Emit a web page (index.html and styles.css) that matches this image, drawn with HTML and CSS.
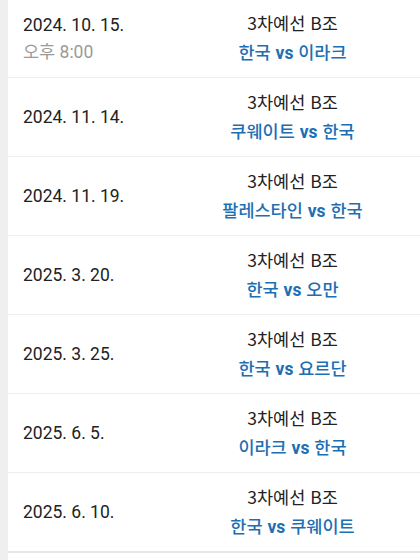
FILE: index.html
```html
<!DOCTYPE html>
<html lang="ko">
<head>
<meta charset="utf-8">
<link rel="stylesheet" href="styles.css">
</head>
<body>
<div class="page">
  <div class="strip"></div>
  <ul class="list">
    <li class="row">
      <div class="when"><div class="date">2024. 10. 15.</div><div class="time">오후 8:00</div></div>
      <div class="match"><div class="stage">3차예선 B조</div><div class="teams">한국 <b>vs</b> 이라크</div></div>
    </li>
    <li class="row">
      <div class="when"><div class="date">2024. 11. 14.</div></div>
      <div class="match"><div class="stage">3차예선 B조</div><div class="teams">쿠웨이트 <b>vs</b> 한국</div></div>
    </li>
    <li class="row">
      <div class="when"><div class="date">2024. 11. 19.</div></div>
      <div class="match"><div class="stage">3차예선 B조</div><div class="teams">팔레스타인 <b>vs</b> 한국</div></div>
    </li>
    <li class="row">
      <div class="when"><div class="date">2025. 3. 20.</div></div>
      <div class="match"><div class="stage">3차예선 B조</div><div class="teams">한국 <b>vs</b> 오만</div></div>
    </li>
    <li class="row">
      <div class="when"><div class="date">2025. 3. 25.</div></div>
      <div class="match"><div class="stage">3차예선 B조</div><div class="teams">한국 <b>vs</b> 요르단</div></div>
    </li>
    <li class="row">
      <div class="when"><div class="date">2025. 6. 5.</div></div>
      <div class="match"><div class="stage">3차예선 B조</div><div class="teams">이라크 <b>vs</b> 한국</div></div>
    </li>
    <li class="row last">
      <div class="when"><div class="date">2025. 6. 10.</div></div>
      <div class="match"><div class="stage">3차예선 B조</div><div class="teams">한국 <b>vs</b> 쿠웨이트</div></div>
    </li>
  </ul>
</div>
</body>
</html>
```
FILE: styles.css
```css
html, body {
  margin: 0;
  padding: 0;
  background: #ffffff;
}
body {
  font-family: Roboto, "Noto Sans CJK KR", sans-serif;
  color: #222222;
  width: 420px;
  height: 560px;
  overflow: hidden;
}
.page {
  display: flex;
  height: 560px;
}
.strip {
  width: 8px;
  flex: none;
  background: #efefef;
}
.list {
  list-style: none;
  margin: -1px 0 0 0;
  padding: 0;
  flex: 1;
}
.row {
  display: grid;
  grid-template-columns: 142px 1fr;
  align-items: center;
  height: 78px;
  padding-left: 15px;
  border-bottom: 1px solid #eeeeee;
}
.row.last {
  border-bottom: 2px solid #e8e8e8;
}
.when {
  display: flex;
  flex-direction: column;
  gap: 5px;
}
.date {
  font-size: 17.5px;
  line-height: 22px;
  color: #222222;
}
.time {
  font-size: 17.5px;
  line-height: 22px;
  color: #9a9a9a;
}
.match {
  text-align: center;
  font-family: "Noto Sans CJK KR", Roboto, sans-serif;
}
.stage {
  font-size: 17.5px;
  line-height: 29px;
  color: #222222;
}
.teams {
  font-size: 17.5px;
  line-height: 29px;
  color: #1d6fb3;
  font-weight: 500;
}
.teams b {
  font-family: Roboto, sans-serif;
  font-weight: 700;
}
```
